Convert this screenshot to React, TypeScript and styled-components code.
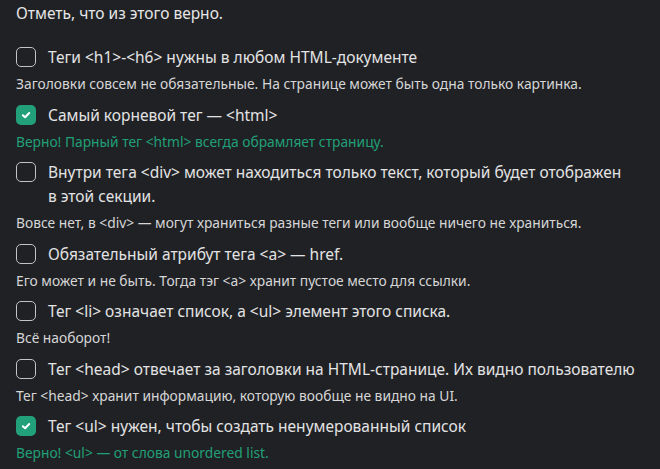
import React from "react";
import styled, { createGlobalStyle } from "styled-components";

const Global = createGlobalStyle`
  html, body { margin: 0; padding: 0; background: #202125; }
  body { font-family: "Noto Sans", "Open Sans", sans-serif; }
`;

const Page = styled.div`
  width: 660px;
  height: 469px;
  overflow: hidden;
  padding: 1px 16px 0 16px;
  box-sizing: border-box;
  background: #202125;
`;

const Title = styled.div`
  font-size: 15.5px;
  line-height: 24px;
  color: #e6e6e6;
  margin-bottom: 20px;
`;

const List = styled.div`
  display: flex;
  flex-direction: column;
  gap: 9.5px;
`;

const Item = styled.div`
  display: flex;
  flex-direction: column;
  gap: 6px;
`;

const Row = styled.label`
  display: flex;
  align-items: flex-start;
  gap: 12px;
`;

const Box = styled.span<{ $checked: boolean }>`
  flex: none;
  width: 20px;
  height: 20px;
  margin-top: 2px;
  box-sizing: border-box;
  border-radius: 5px;
  border: ${(p) => (p.$checked ? "none" : "1.5px solid #c4c4c4")};
  background: ${(p) => (p.$checked ? "#21a07a" : "transparent")};
  display: flex;
  align-items: center;
  justify-content: center;
`;

const OptionText = styled.span`
  font-size: 15.5px;
  line-height: 24px;
  color: #e3e3e3;
  max-width: 600px;
  white-space: pre-line;
`;

const Note = styled.div<{ $correct: boolean }>`
  font-size: 13.8px;
  line-height: 18px;
  color: ${(p) => (p.$correct ? "#20a077" : "#d6d6d6")};
`;

const Check = () => (
  <svg width="12" height="12" viewBox="0 0 12 12" fill="none">
    <path d="M2.8 6.2 L5.1 8.3 L9.2 4" stroke="#fff" strokeWidth="2" strokeLinecap="round" strokeLinejoin="round" />
  </svg>
);

const items = [
  { text: "Теги <h1>-<h6> нужны в любом HTML-документе", note: "Заголовки совсем не обязательные. На странице может быть одна только картинка.", checked: false },
  { text: "Самый корневой тег — <html>", note: "Верно! Парный тег <html> всегда обрамляет страницу.", checked: true },
  { text: "Внутри тега <div> может находиться только текст, который будет отображен\nв этой секции.", note: "Вовсе нет, в <div> — могут храниться разные теги или вообще ничего не храниться.", checked: false },
  { text: "Обязательный атрибут тега <a> — href.", note: "Его может и не быть. Тогда тэг <a> хранит пустое место для ссылки.", checked: false },
  { text: "Тег <li> означает список, а <ul> элемент этого списка.", note: "Всё наоборот!", checked: false },
  { text: "Тег <head> отвечает за заголовки на HTML-странице. Их видно пользователю", note: "Тег <head> хранит информацию, которую вообще не видно на UI.", checked: false },
  { text: "Тег <ul> нужен, чтобы создать ненумерованный список", note: "Верно! <ul> — от слова unordered list.", checked: true },
];

export default function App() {
  return (
    <>
      <Global />
      <Page>
        <Title>Отметь, что из этого верно.</Title>
        <List>
          {items.map((it, i) => (
            <Item key={i}>
              <Row>
                <Box $checked={it.checked}>{it.checked && <Check />}</Box>
                <OptionText>{it.text}</OptionText>
              </Row>
              <Note $correct={it.checked}>{it.note}</Note>
            </Item>
          ))}
        </List>
      </Page>
    </>
  );
}
